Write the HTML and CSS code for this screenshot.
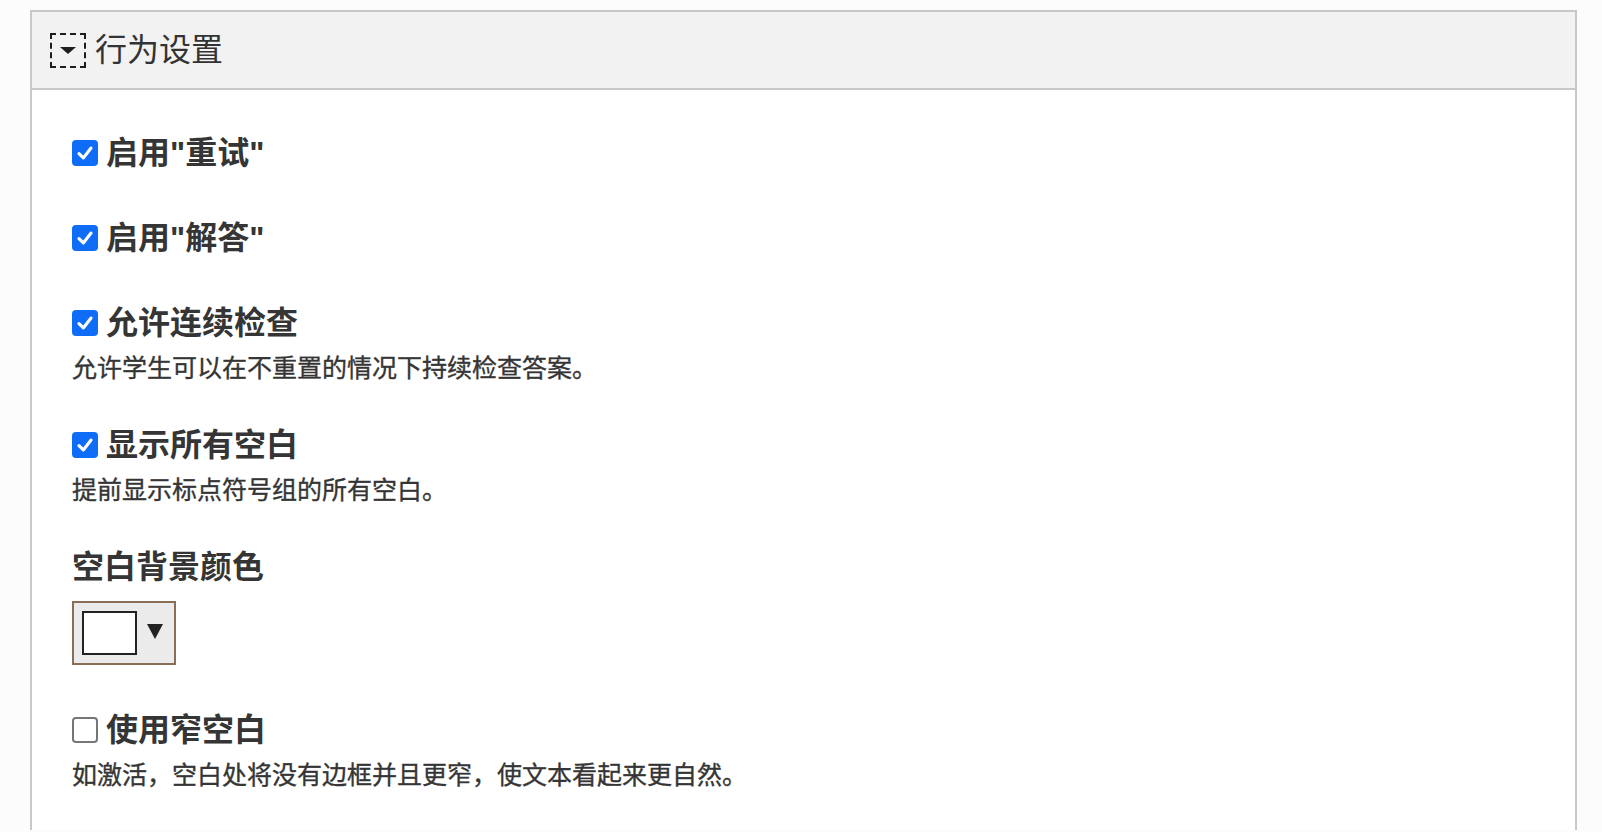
FILE: index.html
```html
<!DOCTYPE html>
<html lang="zh">
<head>
    <meta charset="UTF-8">
    <title>行为设置</title>
    <link rel="stylesheet" href="styles.css">
</head>
<body>
    <div class="panel">
        <div class="panel-head">
            <span class="toggle"><span class="arrow"></span></span>
            <span class="panel-title">行为设置</span>
        </div>
        <div class="panel-body">
            <div class="field">
                <label class="check-row">
                    <span class="box checked">
                        <svg viewBox="0 0 20 20"><polyline points="4.5,10.5 8.5,14.5 15.5,5.5" /></svg>
                    </span>
                    <span class="label">启用"重试"</span>
                </label>
            </div>
            <div class="field">
                <label class="check-row">
                    <span class="box checked">
                        <svg viewBox="0 0 20 20"><polyline points="4.5,10.5 8.5,14.5 15.5,5.5" /></svg>
                    </span>
                    <span class="label">启用"解答"</span>
                </label>
            </div>
            <div class="field">
                <label class="check-row">
                    <span class="box checked">
                        <svg viewBox="0 0 20 20"><polyline points="4.5,10.5 8.5,14.5 15.5,5.5" /></svg>
                    </span>
                    <span class="label">允许连续检查</span>
                </label>
                <div class="desc">允许学生可以在不重置的情况下持续检查答案。</div>
            </div>
            <div class="field">
                <label class="check-row">
                    <span class="box checked">
                        <svg viewBox="0 0 20 20"><polyline points="4.5,10.5 8.5,14.5 15.5,5.5" /></svg>
                    </span>
                    <span class="label">显示所有空白</span>
                </label>
                <div class="desc">提前显示标点符号组的所有空白。</div>
            </div>
            <div class="field">
                <div class="label">空白背景颜色</div>
                <div class="color-pick">
                    <span class="swatch"></span>
                    <span class="caret"></span>
                </div>
            </div>
            <div class="field">
                <label class="check-row">
                    <span class="box"></span>
                    <span class="label">使用窄空白</span>
                </label>
                <div class="desc">如激活，空白处将没有边框并且更窄，使文本看起来更自然。</div>
            </div>
        </div>
    </div>
</body>
</html>
```

FILE: styles.css
```css
body {
    margin: 0;
    background-color: #fcfcfc;
    font-family: "Liberation Sans", "Noto Sans CJK SC", sans-serif;
    color: #353535;
}

.panel {
    margin: 10px 25px 0 30px;
    border: 2px solid #c8c8c8;
    border-bottom: none;
    background-color: #fff;
    height: 820px;
    box-sizing: border-box;
}

.panel-head {
    display: flex;
    align-items: center;
    height: 76px;
    padding-left: 18px;
    background-color: #f2f2f2;
    border-bottom: 2px solid #c8c8c8;
}

.toggle {
    width: 32px;
    height: 31px;
    border: 2px dashed #1e1e1e;
    display: flex;
    justify-content: center;
    align-items: center;
    margin-right: 9px;
}

.arrow {
    width: 0;
    height: 0;
    border-left: 8px solid transparent;
    border-right: 8px solid transparent;
    border-top: 7px solid #1e1e1e;
}

.panel-title {
    font-size: 32px;
    line-height: 40px;
    color: #333;
}

.panel-body {
    padding: 43px 40px 0 40px;
}

.field {
    margin-bottom: 45px;
}

.check-row {
    display: flex;
    align-items: center;
    height: 40px;
}

.box {
    width: 22px;
    height: 22px;
    border: 2px solid #767676;
    border-radius: 4px;
    margin-right: 8px;
    display: flex;
    justify-content: center;
    align-items: center;
    flex-shrink: 0;
}

.box.checked {
    background-color: #0f6cf6;
    border-color: #0f6cf6;
}

.box svg {
    width: 22px;
    height: 22px;
    fill: none;
    stroke: #fff;
    stroke-width: 2.8;
    stroke-linecap: round;
    stroke-linejoin: round;
}

.label {
    font-size: 32px;
    font-weight: bold;
    line-height: 40px;
    color: #353535;
}

.desc {
    margin-top: 13px;
    font-size: 25px;
    line-height: 24px;
    color: #353535;
    -webkit-text-stroke: 0.35px #353535;
}

.color-pick {
    margin-top: 14px;
    width: 92px;
    height: 60px;
    border: 2px solid #8a6e56;
    background-color: #ebebeb;
    display: flex;
    align-items: center;
    padding-left: 8px;
}

.swatch {
    width: 51px;
    height: 40px;
    border: 2px solid #222;
    background-color: #fff;
}

.caret {
    margin-left: 10px;
    margin-top: -4px;
    width: 0;
    height: 0;
    border-left: 8px solid transparent;
    border-right: 8px solid transparent;
    border-top: 15px solid #222;
}
```
